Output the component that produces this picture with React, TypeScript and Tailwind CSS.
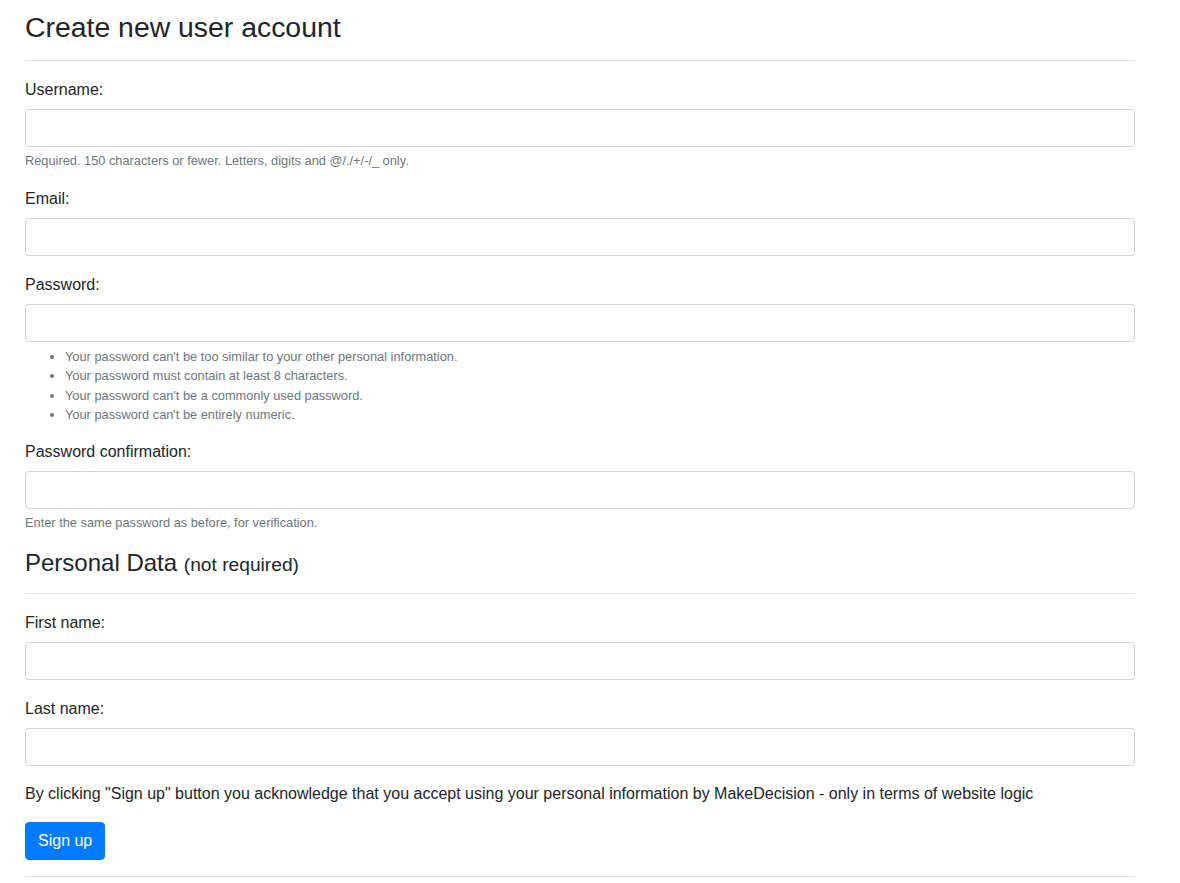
const inputClass =
    "block w-full h-[38px] rounded-[4px] border border-[#ced4da] bg-white px-3 text-base text-[#495057]";

function Field({ label, type = "text", children }: { label: string; type?: string; children?: React.ReactNode }) {
    return (
        <div className="mb-4">
            <label className="mb-2 block leading-6 pt-px h-6">{label}</label>
            <input type={type} className={inputClass} />
            {children}
        </div>
    );
}

function Help({ children }: { children: React.ReactNode }) {
    return <small className="mt-1 block text-[12.8px] leading-[19.2px] text-[#6c757d]">{children}</small>;
}

export default function App() {
    return (
        <div className="min-h-[883px] bg-white font-['Liberation_Sans',Arial,sans-serif] text-base text-[#212529]">
            <div className="ml-[25px] w-[1110px] pt-[10px]">
                <h3 className="text-[28.4px] font-normal leading-[1.2]">Create new user account</h3>
                <hr className="mt-4 mb-4 border-t border-[rgba(0,0,0,0.1)]" />

                <form>
                    <Field label="Username:">
                        <Help>Required. 150 characters or fewer. Letters, digits and @/./+/-/_ only.</Help>
                    </Field>
                    <Field label="Email:" type="email" />
                    <Field label="Password:" type="password">
                        <Help>
                            <ul className="list-disc pl-10 pt-px -mb-px">
                                <li>Your password can't be too similar to your other personal information.</li>
                                <li>Your password must contain at least 8 characters.</li>
                                <li>Your password can't be a commonly used password.</li>
                                <li>Your password can't be entirely numeric.</li>
                            </ul>
                        </Help>
                    </Field>
                    <Field label="Password confirmation:" type="password">
                        <Help>Enter the same password as before, for verification.</Help>
                    </Field>

                    <h4 className="h-[29px] pt-px text-2xl font-normal leading-[1.2]">
                        Personal Data <small className="text-[19.2px]">(not required)</small>
                    </h4>
                    <hr className="mt-4 mb-4 border-t border-[rgba(0,0,0,0.1)]" />

                    <Field label="First name:" />
                    <Field label="Last name:" />

                    <p className="mb-4 leading-6">
                        By clicking "Sign up" button you acknowledge that you accept using your personal information by
                        MakeDecision - only in terms of website logic
                    </p>
                    <button
                        type="submit"
                        className="h-[38px] rounded-[4px] border border-[#007bff] bg-[#007bff] px-3 text-base leading-6 text-white"
                    >
                        Sign up
                    </button>
                    <hr className="mt-4 mb-4 border-t border-[rgba(0,0,0,0.1)]" />
                </form>
            </div>
        </div>
    );
}
